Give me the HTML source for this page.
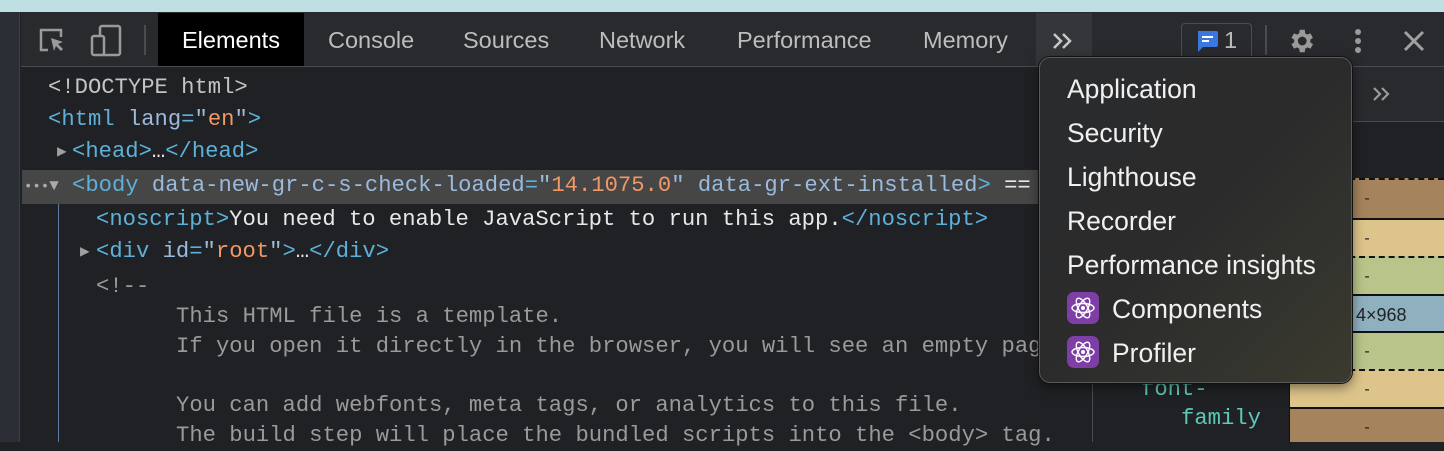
<!DOCTYPE html>
<html><head><meta charset="utf-8"><style>
*{margin:0;padding:0;box-sizing:border-box}
body{width:1444px;height:442px;overflow:hidden;background:#202124;position:relative;font-family:"Liberation Sans",sans-serif}
.a{position:absolute}
.m{font-family:"Liberation Mono","DejaVu Sans Mono",monospace;font-size:22.2px;white-space:pre;line-height:30px;color:#c4c4c4}
.t{color:#5db0d7}.at{color:#9bbbdc}.v{color:#f29766}.w{color:#e8e8e8}.c{color:#9a9a9a}
.tab{position:absolute;top:14px;height:53px;line-height:53px;font-size:23.5px;color:#bdbdbd}
.mi{position:absolute;left:27px;font-size:26.5px;color:#f0f0f0;line-height:30px}
.ic{display:inline-block;width:32px;height:32px;border-radius:7px;background:#7d3fa6;vertical-align:middle;margin-right:13px;position:relative;top:-3px}
.bx{position:absolute;left:1290px;width:154px;text-align:center;color:#222;font-size:16px;line-height:38px}
</style></head><body>
<div class="a" style="left:0;top:0;width:1444px;height:12px;background:#bfe0e2"></div>
<div class="a" style="left:0;top:12px;width:20px;height:430px;background:#2b2e35;border-right:1px solid #3c3f44"></div>
<div class="a" style="left:21px;top:12px;width:1423px;height:55px;background:#292a2d;border-bottom:1px solid #4a4c50"></div>
<svg class="a" style="left:38px;top:26px" width="32" height="30" viewBox="0 0 32 30"><path d="M10 24H3V4h20v7" fill="none" stroke="#9a9a9a" stroke-width="2.5"/><path d="M13 12l12 4-5 2 5 5-2 2-5-5-2 5z" fill="#9a9a9a"/></svg>
<svg class="a" style="left:90px;top:24px" width="34" height="34" viewBox="0 0 34 34"><rect x="10" y="2" width="20" height="29" rx="2" fill="none" stroke="#9a9a9a" stroke-width="2.5"/><rect x="2" y="12" width="12" height="19" rx="2" fill="#292a2d" stroke="#9a9a9a" stroke-width="2.5"/></svg>
<div class="a" style="left:144px;top:25px;width:2px;height:30px;background:#4a4c50"></div>
<div class="a" style="left:158px;top:13px;width:146px;height:53px;background:#000"></div>
<div class="tab" style="left:182px;color:#fff">Elements</div>
<div class="tab" style="left:328px">Console</div>
<div class="tab" style="left:463px">Sources</div>
<div class="tab" style="left:599px">Network</div>
<div class="tab" style="left:737px">Performance</div>
<div class="tab" style="left:923px">Memory</div>
<div class="a" style="left:1036px;top:13px;width:56px;height:53px;background:#35363a"></div>
<svg class="a" style="left:1052px;top:32px" width="22" height="18" viewBox="0 0 22 18"><path d="M2 2l7 7-7 7M11 2l7 7-7 7" fill="none" stroke="#c8c8c8" stroke-width="2.5"/></svg>
<div class="a" style="left:1181px;top:23px;width:71px;height:44px;border:1.5px solid #4a4c50;border-bottom:none;border-radius:4px 4px 0 0"></div>
<svg class="a" style="left:1195px;top:29px" width="24" height="24" viewBox="0 0 24 24"><path d="M3 2h18a2 2 0 0 1 2 2v12a2 2 0 0 1-2 2H8l-5 5z" fill="#3a78e0"/><rect x="7" y="7" width="11" height="2" fill="#fff"/><rect x="7" y="11" width="7" height="2" fill="#fff"/></svg>
<div class="tab" style="left:1224px;top:14px;color:#bbb">1</div>
<div class="a" style="left:1265px;top:25px;width:2px;height:30px;background:#4a4c50"></div>
<svg class="a" style="left:1286px;top:26px" width="30" height="30" viewBox="0 0 24 24"><path fill="#9a9a9a" d="M19.4 13a7.5 7.5 0 0 0 0-2l2.1-1.6-2-3.5-2.5 1a7 7 0 0 0-1.7-1L15 3h-4l-.4 2.9a7 7 0 0 0-1.7 1l-2.5-1-2 3.5L6.6 11a7.5 7.5 0 0 0 0 2l-2.2 1.6 2 3.5 2.5-1a7 7 0 0 0 1.7 1L11 21h4l.4-2.9a7 7 0 0 0 1.7-1l2.5 1 2-3.5zM13 15.5a3.5 3.5 0 1 1 0-7 3.5 3.5 0 0 1 0 7z"/></svg>
<div class="a" style="left:1355px;top:29px;width:6px;height:6px;border-radius:3px;background:#9a9a9a;box-shadow:0 9px 0 #9a9a9a,0 18px 0 #9a9a9a"></div>
<svg class="a" style="left:1403px;top:30px" width="22" height="22" viewBox="0 0 22 22"><path d="M2 2l18 18M20 2L2 20" stroke="#a0a0a0" stroke-width="3"/></svg>
<div class="a" style="left:22px;top:170px;width:1070px;height:34px;background:#464646"></div>
<div class="a" style="left:58px;top:204px;width:1px;height:238px;background:#8ab4f8;opacity:.6"></div>
<div class="a m" style="left:48px;top:73px">&lt;!DOCTYPE html&gt;</div>
<div class="a m t" style="left:48px;top:105px">&lt;html <span class="at">lang</span>=<span class="at">"</span><span class="v">en</span><span class="at">"</span>&gt;</div>
<div class="a m" style="left:57px;top:137px;color:#a0a0a0;font-size:16px">▶</div>
<div class="a m t" style="left:72px;top:137px">&lt;head&gt;<span class="w">…</span>&lt;/head&gt;</div>
<div class="a m" style="left:24px;top:171px;color:#aaa;font-size:14px">•••<span style="font-size:16px">▼</span></div>
<div class="a m t" style="left:72px;top:171px">&lt;body <span class="at">data-new-gr-c-s-check-loaded</span>=<span class="at">"</span><span class="v">14.1075.0</span><span class="at">"</span> <span class="at">data-gr-ext-installed</span>&gt; <span class="w">==</span></div>
<div class="a m t" style="left:96px;top:205px">&lt;noscript&gt;<span class="w">You need to enable JavaScript to run this app.</span>&lt;/noscript&gt;</div>
<div class="a m" style="left:80px;top:237px;color:#a0a0a0;font-size:16px">▶</div>
<div class="a m t" style="left:96px;top:237px">&lt;div <span class="at">id</span>=<span class="at">"</span><span class="v">root</span><span class="at">"</span>&gt;<span class="w">…</span>&lt;/div&gt;</div>
<div class="a m c" style="left:96px;top:272px">&lt;!--</div>
<div class="a m c" style="left:176px;top:302px">This HTML file is a template.</div>
<div class="a m c" style="left:176px;top:332px">If you open it directly in the browser, you will see an empty page.</div>
<div class="a m c" style="left:176px;top:391px">You can add webfonts, meta tags, or analytics to this file.</div>
<div class="a m c" style="left:176px;top:421px">The build step will place the bundled scripts into the &lt;body&gt; tag.</div>
<div class="a" style="left:1092px;top:67px;width:352px;height:375px;background:#202124;border-left:1px solid #4a4c50"></div>
<div class="a" style="left:1093px;top:67px;width:351px;height:55px;background:#292a2d;border-bottom:1px solid #4a4c50"></div>
<svg class="a" style="left:1372px;top:86px" width="20" height="16" viewBox="0 0 20 16"><path d="M2 2l6 6-6 6M10 2l6 6-6 6" fill="none" stroke="#9a9a9a" stroke-width="2.2"/></svg>
<div class="a" style="left:1289px;top:177px;width:155px;height:265px;border-left:1px solid #111"></div>
<div class="bx" style="top:178px;height:40px;background:#a5835c;border-top:2px dashed #111">-</div>
<div class="bx" style="top:218px;height:38px;background:#ddc48a;border-top:2px solid #111">-</div>
<div class="bx" style="top:256px;height:38px;background:#b9c48a;border-top:2px dashed #111">-</div>
<div class="bx" style="top:294px;height:37px;background:#8fb1bf;border-top:2px solid #111;text-align:left;padding-left:66px;font-size:18px">4×968</div>
<div class="bx" style="top:331px;height:38px;background:#b9c48a;border-top:2px solid #111">-</div>
<div class="bx" style="top:369px;height:38px;background:#ddc48a;border-top:2px dashed #111">-</div>
<div class="bx" style="top:407px;height:35px;background:#a5835c;border-top:2px solid #111">-</div>
<div class="a m" style="left:1141px;top:375px;color:#5fc9b9">font-</div>
<div class="a m" style="left:1181px;top:404px;color:#5fc9b9">family</div>
<div class="a" style="left:1039px;top:57px;width:313px;height:326px;border-radius:11px;background:linear-gradient(135deg,#2a2b2d 0%,#2b2b2c 50%,#3a3a2f 100%);border:1.5px solid #5a5a5a;box-shadow:0 0 0 1px #111,0 4px 12px rgba(0,0,0,.5)">
<div class="mi" style="top:16px">Application</div>
<div class="mi" style="top:60px">Security</div>
<div class="mi" style="top:104px">Lighthouse</div>
<div class="mi" style="top:148px">Recorder</div>
<div class="mi" style="top:192px">Performance insights</div>
<div class="mi" style="top:236px"><span class="ic"><svg width="32" height="32" viewBox="0 0 32 32"><g fill="none" stroke="#fff" stroke-width="1.4"><ellipse cx="16" cy="16" rx="11" ry="4.5"/><ellipse cx="16" cy="16" rx="11" ry="4.5" transform="rotate(60 16 16)"/><ellipse cx="16" cy="16" rx="11" ry="4.5" transform="rotate(-60 16 16)"/></g><circle cx="16" cy="16" r="2" fill="#fff"/></svg></span>Components</div>
<div class="mi" style="top:280px"><span class="ic"><svg width="32" height="32" viewBox="0 0 32 32"><g fill="none" stroke="#fff" stroke-width="1.4"><ellipse cx="16" cy="16" rx="11" ry="4.5"/><ellipse cx="16" cy="16" rx="11" ry="4.5" transform="rotate(60 16 16)"/><ellipse cx="16" cy="16" rx="11" ry="4.5" transform="rotate(-60 16 16)"/></g><circle cx="16" cy="16" r="2" fill="#fff"/></svg></span>Profiler</div>
</div>
</body></html>
